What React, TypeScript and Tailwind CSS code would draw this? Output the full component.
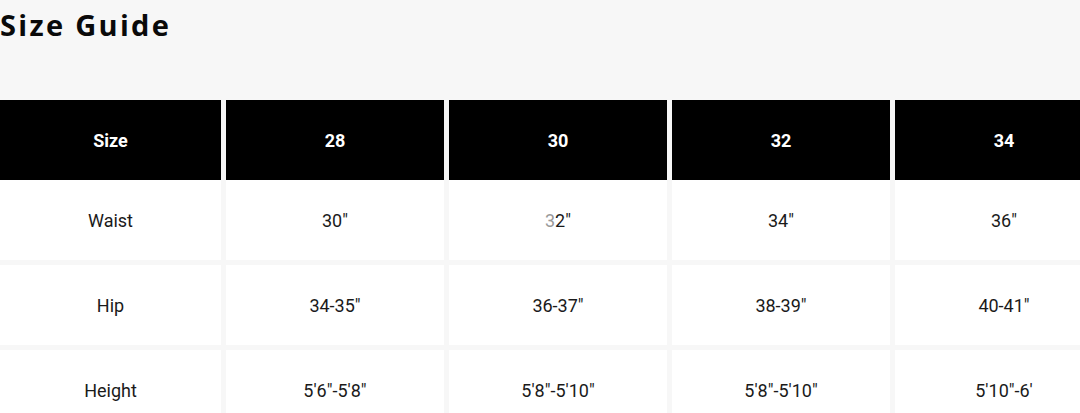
const columns = ["28", "30", "32", "34"];

const rows = [
    { label: "Waist", values: ['30"', '32"', '34"', '36"'] },
    { label: "Hip", values: ['34-35"', '36-37"', '38-39"', '40-41"'] },
    { label: "Height", values: ["5'6\"-5'8\"", "5'8\"-5'10\"", "5'8\"-5'10\"", "5'10\"-6'"] },
];

const gridCols = "grid grid-cols-[221px_218px_218px_218px_218px] gap-x-[5px]";

const SizeGuide = () => {
    return (
        <div className="w-[1080px] h-[413px] overflow-hidden bg-[#f7f7f7] font-['Roboto',sans-serif]">
            <h1 className="h-[100px] pt-[6px] text-[29px] leading-[38px] font-bold tracking-[0.08em] text-[#0a0a0a] font-['Open_Sans',sans-serif]">
                Size Guide
            </h1>

            <div className="flex flex-col">
                <div className={gridCols}>
                    <div className="h-[80px] bg-black flex items-center justify-center text-white font-bold text-[18px]">
                        Size
                    </div>
                    {columns.map((c) => (
                        <div
                            key={c}
                            className="h-[80px] bg-black flex items-center justify-center text-white font-bold text-[18px]"
                        >
                            {c}
                        </div>
                    ))}
                </div>

                <div className="flex flex-col gap-y-[5px]">
                    {rows.map((r) => (
                        <div key={r.label} className={gridCols}>
                            <div className="h-[80px] pt-[2px] bg-white flex items-center justify-center text-[18px] leading-[28px] text-[#1a1a1a]">
                                {r.label}
                            </div>
                            {r.values.map((v, i) => (
                                <div
                                    key={i}
                                    className="h-[80px] pt-[2px] bg-white flex items-center justify-center text-[18px] leading-[28px] text-[#1a1a1a]"
                                >
                                    {r.label === "Waist" && i === 1 ? (
                                        <>
                                            <span className="text-[#9a9a9a]">3</span>2"
                                        </>
                                    ) : (
                                        v
                                    )}
                                </div>
                            ))}
                        </div>
                    ))}
                </div>
            </div>
        </div>
    );
};

export default function App() {
    return <SizeGuide />;
}
